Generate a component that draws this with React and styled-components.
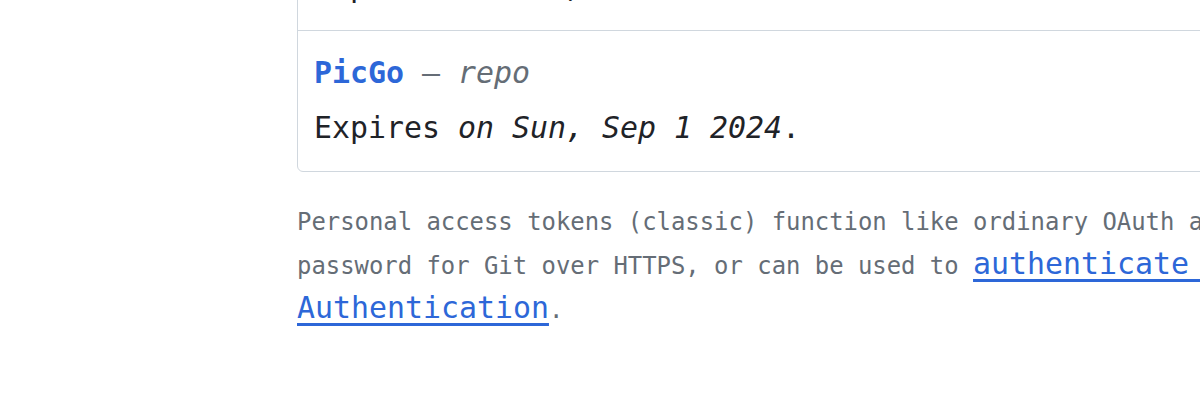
import React from "react";
import styled, { createGlobalStyle } from "styled-components";

const GlobalStyle = createGlobalStyle`
  html, body {
    margin: 0;
    padding: 0;
    overflow: hidden;
    background: #ffffff;
  }
  body {
    font-family: "DejaVu Sans Mono", "Liberation Mono", monospace;
    color: #1f2328;
  }
`;

const Page = styled.main`
  margin-top: -111px;
  padding-left: 297px;
  width: 1548px;
`;

const TokenList = styled.ul`
  list-style: none;
  margin: 0;
  padding: 0;
  border: 1px solid #d0d7de;
  border-radius: 6px;
`;

const TokenItem = styled.li`
  display: flex;
  flex-direction: column;
  gap: 5px;
  padding: 17px 16px 18px;
  font-size: 29.9px;
  line-height: 50px;

  & + & {
    border-top: 1px solid #d0d7de;
  }
`;

const TokenTitle = styled.div`
  color: #656d76;
`;

const TokenName = styled.a`
  color: #2d67d8;
  font-weight: bold;
  text-decoration: none;
`;

const Scope = styled.em`
  color: #656d76;
  font-style: italic;
`;

const Expiry = styled.div`
  color: #1f2328;
`;

const Note = styled.p`
  margin: 28px 0 0;
  font-size: 23.9px;
  line-height: 44px;
  color: #656d76;
`;

const NoteLink = styled.a`
  font-size: 29.9px;
  line-height: 1;
  color: #2d67d8;
  text-decoration: underline;
  text-decoration-thickness: 3px;
  text-underline-offset: 5px;
`;

const tokens = [
  { name: "Typora", scope: "repo", date: "Mon, Dec 30 2024" },
  { name: "PicGo", scope: "repo", date: "Sun, Sep 1 2024" },
];

export default function App() {
  return (
    <>
      <GlobalStyle />
      <Page>
        <TokenList>
          {tokens.map((t) => (
            <TokenItem key={t.name}>
              <TokenTitle>
                <TokenName href="#">{t.name}</TokenName> — <Scope>{t.scope}</Scope>
              </TokenTitle>
              <Expiry>
                Expires <em>on {t.date}</em>.
              </Expiry>
            </TokenItem>
          ))}
        </TokenList>
        <Note>
          Personal access tokens (classic) function like ordinary OAuth access
          tokens. They can be used instead of a password for Git over HTTPS, or
          can be used to{" "}
          <NoteLink href="#">
            authenticate to the API over Basic Authentication
          </NoteLink>
          .
        </Note>
      </Page>
    </>
  );
}
